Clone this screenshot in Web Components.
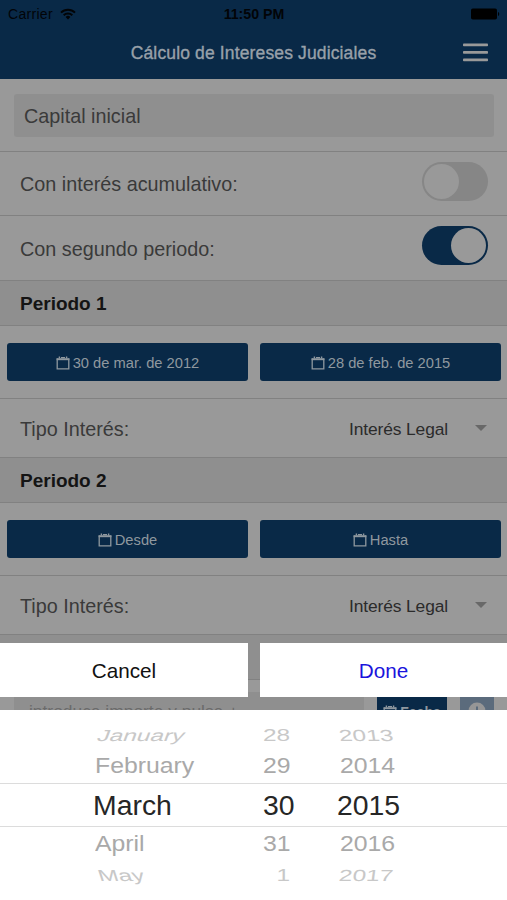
<!DOCTYPE html>
<html lang="es">
<head>
<meta charset="utf-8">
<meta name="viewport" content="width=device-width, initial-scale=1">
<title>Cálculo de Intereses Judiciales</title>
<style>
  :root {
    --navy: #092947;
    --page: #999999;
    --bar: #8f8f8f;
    --line: #818181;
    --text: #3a3a3a;
  }
  body {
    margin: 0;
    height: 900px;
    overflow: hidden;
    position: relative;
    background: var(--page);
    color: var(--text);
    font-family: "Liberation Sans", Arial, sans-serif;
  }
</style>
</head>
<body>
<interest-form></interest-form>
<date-sheet></date-sheet>

<script>
class AppHeader extends HTMLElement {
  connectedCallback() {
    this.attachShadow({ mode: 'open' });
    this.shadowRoot.innerHTML = `
      <style>
        :host {
          display: block;
          height: 79px;
          background: var(--navy);
        }
        .status {
          display: grid;
          grid-template-columns: 1fr auto 1fr;
          align-items: center;
          height: 27px;
          padding: 0 7px 0 8px;
          color: #020407;
          font-size: 14px;
        }
        .carrier {
          display: flex;
          align-items: center;
          gap: 7px;
          letter-spacing: 0.3px;
        }
        .time {
          font-weight: 700;
          font-size: 14.2px;
        }
        .battery {
          justify-self: end;
        }
        .bar {
          display: grid;
          grid-template-columns: 1fr auto 1fr;
          align-items: center;
          height: 51px;
          padding: 0 19px;
        }
        h1 {
          grid-column: 2;
          margin: 0;
          padding-top: 2px;
          color: #98a0a9;
          font-size: 17.5px;
          font-weight: 400;
          letter-spacing: 0.14px;
          -webkit-text-stroke: 0.35px #98a0a9;
        }
        .menu {
          justify-self: end;
        }
        svg {
          display: block;
        }
      </style>
      <div class="status">
        <div class="carrier">
          <span>Carrier</span>
          <svg width="16" height="12" viewBox="0 0 16 12" fill="none" stroke="#020407" stroke-width="2">
            <path d="M1 4.6a10 10 0 0 1 14 0"></path>
            <path d="M3.7 7.3a6.2 6.2 0 0 1 8.6 0"></path>
            <path d="M8 11.4 5.6 9a3.5 3.5 0 0 1 4.8 0z" fill="#020407" stroke="none"></path>
          </svg>
        </div>
        <span class="time">11:50 PM</span>
        <svg class="battery" width="29" height="12" viewBox="0 0 29 12" fill="#000">
          <rect x="0" y="0.5" width="26" height="11" rx="1.8"></rect>
          <path d="M27 4c1.6.4 1.6 3.6 0 4z"></path>
        </svg>
      </div>
      <div class="bar">
        <h1>Cálculo de Intereses Judiciales</h1>
        <svg class="menu" width="25" height="19" viewBox="0 0 25 19" fill="#999">
          <rect y="0.5" width="25" height="2.8" rx="0.8"></rect>
          <rect y="8" width="25" height="2.8" rx="0.8"></rect>
          <rect y="15.5" width="25" height="2.8" rx="0.8"></rect>
        </svg>
      </div>
    `;
  }
}

class FormRow extends HTMLElement {
  connectedCallback() {
    this.attachShadow({ mode: 'open' });
    this.shadowRoot.innerHTML = `
      <style>
        :host {
          display: flex;
          align-items: center;
          justify-content: space-between;
          box-sizing: border-box;
          height: 64px;
          padding: 0 20px;
          border-bottom: 1px solid var(--line);
          font-size: 19.8px;
        }
        :host([kind="switch"]) {
          height: var(--h, 64px);
          padding-top: 2px;
        }
        :host([kind="title"]) {
          height: 45px;
          padding-top: 2px;
          background: var(--bar);
          color: #141414;
          font-size: 19px;
          font-weight: 700;
        }
        :host([kind="input"]) {
          height: 73px;
          padding: 0 13px 0 14px;
        }
        :host([kind="dates"]) {
          align-items: flex-start;
          height: 73px;
          padding: 17px 6px 0 7px;
          gap: 12px;
        }
        :host([kind="select"]) {
          height: 59px;
          padding-top: 3px;
        }
      </style>
      <slot></slot>
    `;
  }
}

class TextField extends HTMLElement {
  connectedCallback() {
    this.attachShadow({ mode: 'open' });
    this.shadowRoot.innerHTML = `
      <style>
        :host {
          display: flex;
          flex: 1;
          align-items: center;
          box-sizing: border-box;
          height: 43px;
          padding: 2px 10px 0;
          border-radius: 3px;
          background: var(--bar);
        }
      </style>
      <slot></slot>
    `;
  }
}

class ToggleSwitch extends HTMLElement {
  connectedCallback() {
    this.attachShadow({ mode: 'open' });
    this.shadowRoot.innerHTML = `
      <style>
        :host {
          display: flex;
          box-sizing: border-box;
          width: 66px;
          height: 39px;
          padding: 2px;
          margin: 0 -0.5px 7px 0;
          border-radius: 20px;
          background: #868686;
        }
        :host([on]) {
          justify-content: flex-end;
          background: var(--navy);
        }
        span {
          width: 35px;
          height: 35px;
          border-radius: 50%;
          background: var(--page);
        }
      </style>
      <span></span>
    `;
  }
}

class DateButton extends HTMLElement {
  connectedCallback() {
    this.attachShadow({ mode: 'open' });
    this.shadowRoot.innerHTML = `
      <style>
        :host {
          display: flex;
          flex: 1;
          align-items: center;
          justify-content: center;
          gap: 3px;
          box-sizing: border-box;
          height: 38px;
          padding-top: 1px;
          border-radius: 3px;
          background: var(--navy);
          color: #8f989f;
          font-size: 14.7px;
        }
      </style>
      <svg width="14" height="14" viewBox="0 0 14 14" fill="none" stroke="currentColor">
        <path d="M1.2 2.5v10.3h11.6V2.5" stroke-width="1.3"></path>
        <path d="M0.6 3.2h12.8" stroke-width="2"></path>
        <path d="M3.4 0.6v2M10.6 0.6v2" stroke-width="1.4"></path>
        <path d="M5 1.6h4" stroke-width="1.2"></path>
      </svg>
      <slot></slot>
    `;
  }
}

class SelectValue extends HTMLElement {
  connectedCallback() {
    this.attachShadow({ mode: 'open' });
    this.shadowRoot.innerHTML = `
      <style>
        :host {
          display: flex;
          align-items: center;
          gap: 27px;
          color: #2b2b2b;
          font-size: 17.4px;
          letter-spacing: -0.12px;
        }
        i {
          margin-top: -4px;
          border: 6px solid transparent;
          border-top-color: #686868;
          border-bottom: 0;
        }
      </style>
      <slot></slot><i></i>
    `;
  }
}

class AmountRow extends HTMLElement {
  connectedCallback() {
    this.attachShadow({ mode: 'open' });
    this.shadowRoot.innerHTML = `
      <style>
        :host {
          display: flex;
          padding: 12px 13px 0 14px;
          gap: 13px;
        }
        text-field {
          padding: 0 0 4px 15px;
          color: #6b6b6b;
          font-size: 17.4px;
        }
        date-button {
          flex: 0 0 70px;
          font-weight: 700;
          font-size: 14px;
        }
        .add {
          display: flex;
          align-items: center;
          justify-content: center;
          width: 34px;
          height: 38px;
          background: #5b6b7c;
        }
      </style>
      <text-field>introduce importe y pulse +</text-field>
      <date-button>Fecha</date-button>
      <div class="add">
        <svg width="18" height="18" viewBox="0 0 18 18">
          <circle cx="9" cy="9" r="8.5" fill="#969696"></circle>
          <path d="M9 4.5v9M4.5 9h9" stroke="#5b6b7c" stroke-width="2"></path>
        </svg>
      </div>
    `;
  }
}

class InterestForm extends HTMLElement {
  connectedCallback() {
    this.attachShadow({ mode: 'open' });
    this.shadowRoot.innerHTML = `
      <style>
        :host {
          display: block;
        }
      </style>
      <app-header></app-header>
      <form-row kind="input"><text-field>Capital inicial</text-field></form-row>
      <form-row kind="switch"><span>Con interés acumulativo:</span><toggle-switch></toggle-switch></form-row>
      <form-row kind="switch" style="--h: 65px"><span>Con segundo periodo:</span><toggle-switch on></toggle-switch></form-row>
      <form-row kind="title">Periodo 1</form-row>
      <form-row kind="dates">
        <date-button>30 de mar. de 2012</date-button>
        <date-button>28 de feb. de 2015</date-button>
      </form-row>
      <form-row kind="select"><span>Tipo Interés:</span><select-value>Interés Legal</select-value></form-row>
      <form-row kind="title">Periodo 2</form-row>
      <form-row kind="dates">
        <date-button>Desde</date-button>
        <date-button>Hasta</date-button>
      </form-row>
      <form-row kind="select"><span>Tipo Interés:</span><select-value>Interés Legal</select-value></form-row>
      <form-row kind="title"></form-row>
      <amount-row></amount-row>
    `;
  }
}

// One line of the wheel. Rows further from the centre are flatter and lighter.
class WheelRow extends HTMLElement {
  connectedCallback() {
    const [month, day, year] = this.getAttribute('values').split(',');
    this.attachShadow({ mode: 'open' });
    this.shadowRoot.innerHTML = `
      <style>
        :host {
          display: grid;
          grid-template-columns: 168px 77px 1fr;
          align-items: center;
          box-sizing: border-box;
          height: 34px;
          padding-left: 95px;
          line-height: 30px;
          font-size: 24.8px;
          color: #a9a9a9;
        }
        :host([level="0"]) {
          height: 44px;
          padding-left: 93px;
          grid-template-columns: 170px 74px 1fr;
          border-top: 1px solid #dcdcdc;
          border-bottom: 1px solid #dcdcdc;
          color: #262626;
          font-size: 28.4px;
        }
        :host([level="1"]) span {
          transform: scaleY(0.92);
        }
        :host([level="2"]) {
          height: 28px;
          padding-left: 98px;
          grid-template-columns: 165px 76px 1fr;
          color: #c8c8c8;
          font-size: 24.4px;
        }
        :host([level="2"]) span {
          justify-self: start;
          transform: scaleY(0.66) skewX(var(--lean, 0deg));
        }
        .day {
          width: 1.112em;
          text-align: right;
        }
        .year {
          --lean: calc(var(--tilt, 0deg) * -0.4);
        }
        .month {
          --lean: var(--tilt, 0deg);
        }
      </style>
      <span class="month">${month}</span>
      <span class="day">${day}</span>
      <span class="year">${year}</span>
    `;
  }
}

class DateSheet extends HTMLElement {
  connectedCallback() {
    this.attachShadow({ mode: 'open' });
    this.shadowRoot.innerHTML = `
      <style>
        :host {
          display: flex;
          flex-direction: column;
          gap: 13px;
          position: absolute;
          left: 0;
          right: 0;
          top: 643px;
          bottom: 0;
        }
        .actions {
          display: grid;
          grid-template-columns: 248px 1fr;
          gap: 12px;
          height: 54px;
        }
        button {
          padding: 2px 0 0;
          border: 0;
          background: #fff;
          color: #111;
          font: 20.7px "Liberation Sans", Arial, sans-serif;
        }
        .done {
          color: #1a14dc;
        }
        .wheel {
          flex: 1;
          box-sizing: border-box;
          padding-top: 11px;
          background: #fff;
        }
      </style>
      <div class="actions">
        <button>Cancel</button>
        <button class="done">Done</button>
      </div>
      <div class="wheel">
        <wheel-row level="2" values="January,28,2013" style="--tilt: -14deg"></wheel-row>
        <wheel-row level="1" values="February,29,2014"></wheel-row>
        <wheel-row level="0" values="March,30,2015"></wheel-row>
        <wheel-row level="1" values="April,31,2016"></wheel-row>
        <wheel-row level="2" values="May,1,2017" style="--tilt: 12deg"></wheel-row>
      </div>
    `;
  }
}

customElements.define('app-header', AppHeader);
customElements.define('form-row', FormRow);
customElements.define('text-field', TextField);
customElements.define('toggle-switch', ToggleSwitch);
customElements.define('date-button', DateButton);
customElements.define('select-value', SelectValue);
customElements.define('amount-row', AmountRow);
customElements.define('interest-form', InterestForm);
customElements.define('wheel-row', WheelRow);
customElements.define('date-sheet', DateSheet);
</script>
</body>
</html>
